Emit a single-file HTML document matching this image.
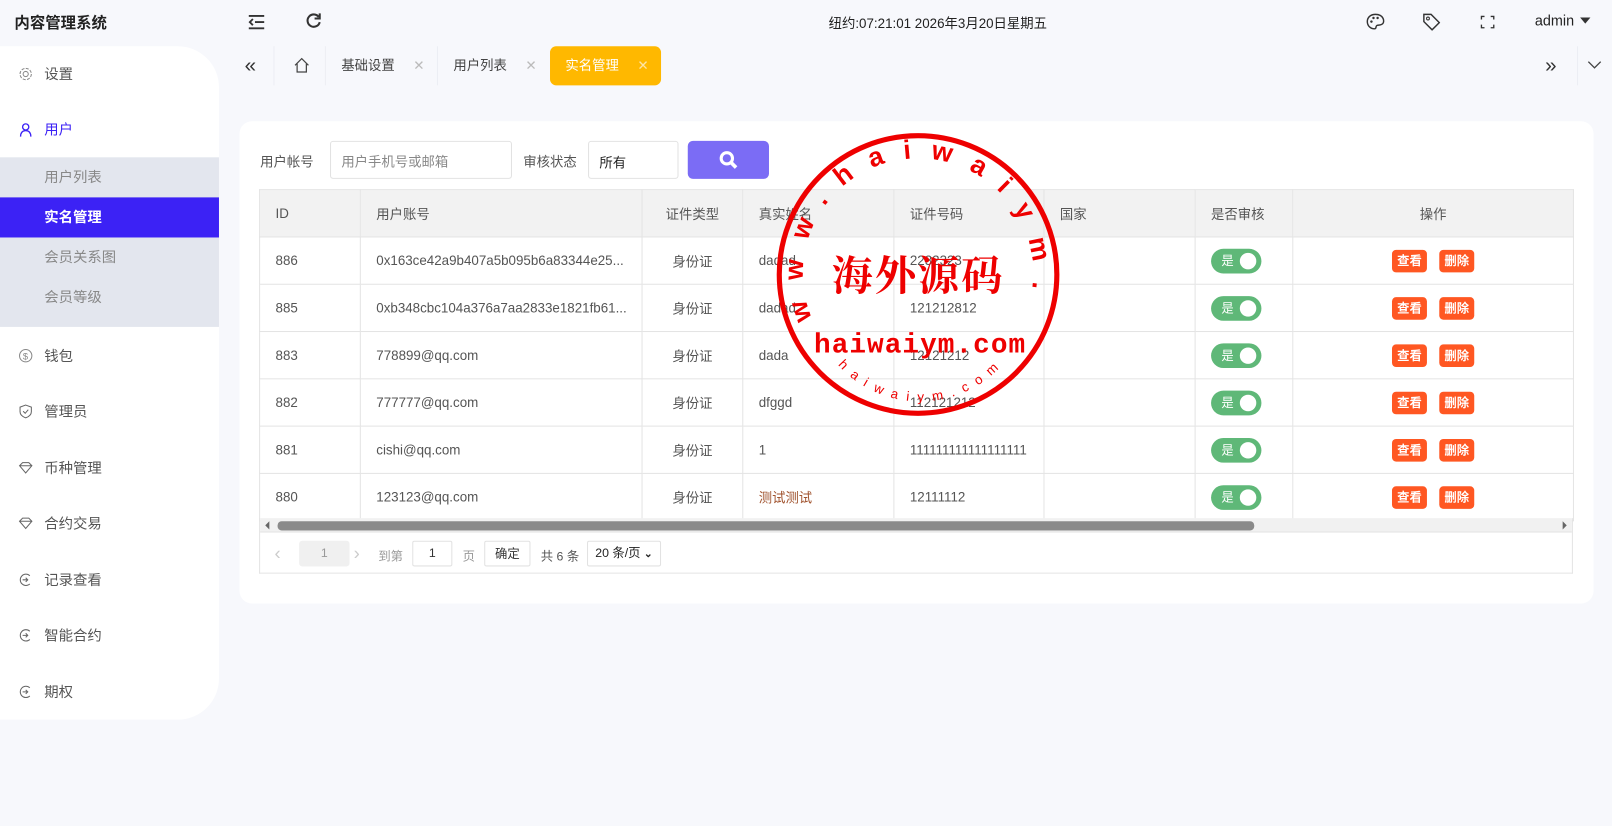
<!DOCTYPE html>
<html><head><meta charset="utf-8">
<style>
*{box-sizing:border-box;margin:0;padding:0}
body{width:1612px;height:825px;background:#f7f8fc;font-family:"Liberation Sans","Noto Sans CJK SC",sans-serif;font-size:13px;color:#333;position:relative;overflow:hidden}
#w{position:absolute;left:0;top:0;width:1568px;height:803px;transform:scale(1.02806);transform-origin:0 0}
.a{position:absolute}
.side{left:0;top:45px;width:213px;height:655px;background:#fff;border-radius:0 40px 40px 0}
.mi{position:absolute;left:0;width:213px;height:40px;line-height:40px;padding-left:43px;color:#555;font-size:14px}
.mi svg{position:absolute;left:18px;top:13px}
.sub{left:0;top:153px;width:213px;height:165px;background:#e3e6ee}
.sub div{height:39px;line-height:39px;padding-left:43px;color:#888;font-size:14px}
.sub .on{background:#3c22f5;color:#fff;font-weight:bold}
.card{left:233px;top:118px;width:1317px;height:469px;background:#fff;border-radius:12px}
table{border-collapse:collapse;position:absolute;left:252px;top:184px;width:1278px;table-layout:fixed}
td,th{border:1px solid #e4e4e4;height:46px;font-weight:normal;text-align:left;padding-left:15px;color:#555;white-space:nowrap;overflow:hidden;text-overflow:ellipsis;font-size:13px}
th{background:#f2f2f2;color:#555}
.c{text-align:center;padding-left:0}
.sw{display:inline-block;width:49px;height:24px;border-radius:12px;background:#5fb878;color:#fff;font-size:12px;line-height:24px;padding-left:10px;position:relative;vertical-align:middle}
.sw:after{content:"";position:absolute;right:5px;top:4px;width:16px;height:16px;border-radius:50%;background:#fff}
.b{display:inline-block;width:34px;height:22px;line-height:22px;text-align:center;background:#ff5722;color:#fff;border-radius:4px;font-size:12px;font-weight:bold;margin:0 6px}
.tab{top:45px;height:38px;line-height:38px;font-size:13px;color:#444}
.x{color:#bbb;margin-left:18px}
</style></head><body><div id="w">
<div class="a" style="left:14px;top:11px;font-size:15px;font-weight:bold;color:#222">内容管理系统</div>
<svg class="a" style="left:241px;top:14px" width="17" height="15" viewBox="0 0 17 15"><path d="M1 1.5h15M7 7.5h9M1 13.5h15M5 4.5L2 7.5l3 3" stroke="#333" stroke-width="1.8" fill="none"/></svg>
<svg class="a" style="left:297px;top:12px" width="16" height="17" viewBox="0 0 16 17"><path d="M13 4.5A6 6 0 1 0 14 9.5" stroke="#333" stroke-width="2" fill="none"/><path d="M14 1v5h-5" stroke="#333" stroke-width="2" fill="none"/></svg>
<div class="a" style="left:806px;top:12px;font-size:13px;color:#222">纽约:07:21:01 2026年3月20日星期五</div>
<svg class="a" style="left:1329px;top:13px" width="18" height="16" viewBox="0 0 18 16"><path d="M9 1C4 1 1 4 1 8s3 7 7 7c2 0 1-2 2-3s4 0 6-2 1-9-7-9z" stroke="#333" stroke-width="1.4" fill="none"/><circle cx="5" cy="8" r="1.2" fill="#333"/><circle cx="7" cy="4.5" r="1.2" fill="#333"/><circle cx="11" cy="4.5" r="1.2" fill="#333"/></svg>
<svg class="a" style="left:1384px;top:13px" width="17" height="17" viewBox="0 0 17 17"><path d="M1 1h7l8 8-7 7-8-8z" stroke="#333" stroke-width="1.4" fill="none"/><circle cx="5" cy="5" r="1.4" stroke="#333" fill="none"/></svg>
<svg class="a" style="left:1440px;top:15px" width="14" height="13" viewBox="0 0 14 13"><path d="M1 4V1h3M10 1h3v3M13 9v3h-3M4 12H1V9" stroke="#333" stroke-width="1.3" fill="none"/></svg>
<div class="a" style="left:1493px;top:12px;font-size:14px;color:#222">admin</div>
<div class="a" style="left:1537px;top:17px;border:5px solid transparent;border-top:6px solid #333"></div>

<div class="a side">
<div class="mi" style="top:7px"><svg width="14" height="14" viewBox="0 0 14 14"><circle cx="7" cy="7" r="2.5" stroke="#888" fill="none"/><circle cx="7" cy="7" r="5.5" stroke="#888" fill="none" stroke-dasharray="3 1.3"/></svg>设置</div>
<div class="mi" style="top:61px;color:#3c22f5"><svg width="14" height="14" viewBox="0 0 14 14"><circle cx="7" cy="4.5" r="3" stroke="#3c22f5" fill="none" stroke-width="1.3"/><path d="M2 14c0-4 2-6 5-6s5 2 5 6" stroke="#3c22f5" fill="none" stroke-width="1.3"/></svg>用户</div>
<div class="mi" style="top:281px"><svg width="14" height="14"><circle cx="7" cy="7" r="6" stroke="#888" fill="none"/><text x="4.3" y="10.5" font-size="9" fill="#888">$</text></svg>钱包</div>
<div class="mi" style="top:335px"><svg width="14" height="14"><path d="M7 1l5.5 2v4.5c0 3-3 5-5.5 6C4.5 12.5 1.5 10.5 1.5 7.5V3z" stroke="#666" fill="none"/><path d="M4.5 7l2 2 3-3.5" stroke="#666" fill="none"/></svg>管理员</div>
<div class="mi" style="top:390px"><svg width="14" height="14"><path d="M1 5l3-3h6l3 3-6 7z M1 5h12" stroke="#666" fill="none"/></svg>币种管理</div>
<div class="mi" style="top:444px"><svg width="14" height="14"><path d="M1 5l3-3h6l3 3-6 7z M1 5h12" stroke="#666" fill="none"/></svg>合约交易</div>
<div class="mi" style="top:499px"><svg width="14" height="14"><path d="M11 3A5.5 5.5 0 1 0 11 11" stroke="#666" fill="none"/><path d="M4 7h5M7 5l2 2-2 2" stroke="#666" fill="none"/></svg>记录查看</div>
<div class="mi" style="top:553px"><svg width="14" height="14"><path d="M11 3A5.5 5.5 0 1 0 11 11" stroke="#666" fill="none"/><path d="M4 7h5M7 5l2 2-2 2" stroke="#666" fill="none"/></svg>智能合约</div>
<div class="mi" style="top:608px"><svg width="14" height="14"><path d="M11 3A5.5 5.5 0 1 0 11 11" stroke="#666" fill="none"/><path d="M4 7h5M7 5l2 2-2 2" stroke="#666" fill="none"/></svg>期权</div>
</div>
<div class="a sub"><div>用户列表</div><div class="on">实名管理</div><div>会员关系图</div><div>会员等级</div></div>

<div class="a tab" style="left:238px;font-size:20px;color:#333">«</div>
<div class="a" style="left:266px;top:45px;width:1px;height:38px;background:#eceef3"></div>
<svg class="a" style="left:286px;top:56px" width="15" height="15" viewBox="0 0 15 15"><path d="M1 7.5L7.5 1 14 7.5M3 6v8h9V6" stroke="#444" fill="none" stroke-width="1.2"/></svg>
<div class="a" style="left:316px;top:45px;width:1px;height:38px;background:#eceef3"></div>
<div class="a tab" style="left:332px">基础设置<span class="x">✕</span></div>
<div class="a" style="left:425px;top:45px;width:1px;height:38px;background:#eceef3"></div>
<div class="a tab" style="left:441px">用户列表<span class="x">✕</span></div>
<div class="a tab" style="left:535px;width:108px;background:#ffb800;border-radius:6px;color:#fff;padding-left:15px">实名管理<span class="x" style="color:#fde4a6">✕</span></div>
<div class="a" style="left:1534px;top:45px;width:1px;height:38px;background:#eceef3"></div>
<div class="a tab" style="left:1503px;font-size:20px;color:#333">»</div>
<svg class="a" style="left:1544px;top:59px" width="14" height="9"><path d="M1 1l6 6 6-6" stroke="#444" fill="none" stroke-width="1.3"/></svg>

<div class="a card"></div>
<div class="a" style="left:253px;top:147px;font-size:13px;color:#555">用户帐号</div>
<div class="a" style="left:321px;top:137px;width:177px;height:37px;border:1px solid #e2e2e2;border-radius:3px;padding:9px 0 0 10px;color:#888;font-size:13px">用户手机号或邮箱</div>
<div class="a" style="left:509px;top:147px;color:#555">审核状态</div>
<div class="a" style="left:572px;top:137px;width:88px;height:37px;border:1px solid #e2e2e2;border-radius:3px;padding:10px 0 0 10px;color:#222">所有</div>
<div class="a" style="left:669px;top:137px;width:79px;height:37px;background:#7b6cf5;border-radius:5px"></div>
<svg class="a" style="left:699px;top:146px" width="19" height="19"><circle cx="8" cy="8" r="5.5" stroke="#fff" stroke-width="3" fill="none"/><path d="M12 12l5 5" stroke="#fff" stroke-width="3.5"/></svg>

<table>
<colgroup><col style="width:98px"><col style="width:274px"><col style="width:98px"><col style="width:147px"><col style="width:146px"><col style="width:147px"><col style="width:95px"><col style="width:273px"></colgroup>
<tr><th>ID</th><th>用户账号</th><th class="c">证件类型</th><th>真实姓名</th><th>证件号码</th><th>国家</th><th>是否审核</th><th class="c">操作</th></tr>
<tr><td>886</td><td>0x163ce42a9b407a5b095b6a83344e25...</td><td class="c">身份证</td><td>dadad</td><td>2232323</td><td></td><td><span class="sw">是</span></td><td class="c"><span class="b">查看</span><span class="b">删除</span></td></tr>
<tr><td>885</td><td>0xb348cbc104a376a7aa2833e1821fb61...</td><td class="c">身份证</td><td>dadad</td><td>121212812</td><td></td><td><span class="sw">是</span></td><td class="c"><span class="b">查看</span><span class="b">删除</span></td></tr>
<tr><td>883</td><td>778899@qq.com</td><td class="c">身份证</td><td>dada</td><td>12121212</td><td></td><td><span class="sw">是</span></td><td class="c"><span class="b">查看</span><span class="b">删除</span></td></tr>
<tr><td>882</td><td>777777@qq.com</td><td class="c">身份证</td><td>dfggd</td><td>112121212</td><td></td><td><span class="sw">是</span></td><td class="c"><span class="b">查看</span><span class="b">删除</span></td></tr>
<tr><td>881</td><td>cishi@qq.com</td><td class="c">身份证</td><td>1</td><td>111111111111111111</td><td></td><td><span class="sw">是</span></td><td class="c"><span class="b">查看</span><span class="b">删除</span></td></tr>
<tr><td>880</td><td>123123@qq.com</td><td class="c">身份证</td><td style="color:#a0522d">测试测试</td><td>12111112</td><td></td><td><span class="sw">是</span></td><td class="c"><span class="b">查看</span><span class="b">删除</span></td></tr>
</table>
<div class="a" style="left:252px;top:504px;width:1278px;height:54px;border:1px solid #e4e4e4;border-top:none"></div>
<div class="a" style="left:253px;top:504px;width:1276px;height:14px;background:#f1f1f1;border-bottom:1px solid #e4e4e4"></div>
<div class="a" style="left:270px;top:507px;width:950px;height:9px;background:#8a8a8a;border-radius:4px"></div>
<div class="a" style="left:258px;top:507px;border:4px solid transparent;border-right:4px solid #666;border-left:none"></div>
<div class="a" style="left:1520px;top:507px;border:4px solid transparent;border-left:4px solid #666;border-right:none"></div>
<div class="a" style="left:267px;top:528px;color:#ccc;font-size:18px">‹</div>
<div class="a" style="left:291px;top:526px;width:49px;height:25px;background:#f0f0f0;border-radius:3px;text-align:center;line-height:25px;color:#999;font-size:12px">1</div>
<div class="a" style="left:344px;top:528px;color:#ccc;font-size:18px">›</div>
<div class="a" style="left:368px;top:532px;color:#999;font-size:12px">到第</div>
<div class="a" style="left:401px;top:526px;width:39px;height:25px;border:1px solid #e2e2e2;border-radius:2px;text-align:center;line-height:23px;font-size:12px">1</div>
<div class="a" style="left:450px;top:532px;color:#999;font-size:12px">页</div>
<div class="a" style="left:471px;top:526px;width:45px;height:25px;border:1px solid #e2e2e2;border-radius:2px;text-align:center;line-height:24px;font-size:12px">确定</div>
<div class="a" style="left:526px;top:532px;color:#555;font-size:12px">共 6 条</div>
<div class="a" style="left:571px;top:526px;width:72px;height:25px;border:1px solid #e2e2e2;border-radius:2px;line-height:23px;padding-left:7px;font-size:12px;color:#222">20 条/页 <b style="font-size:10px">⌄</b></div>

<svg class="a" style="left:740px;top:115px" width="310" height="310" viewBox="740 115 310 310">
<defs>
<path id="tp" d="M790 310 A112 112 0 1 1 998 305"/>
<path id="bp" d="M815 355 A108 108 0 0 0 975 355"/>
</defs>
<circle cx="893" cy="267" r="135" stroke="#ee0000" stroke-width="5" fill="none"/>
<text font-family="Liberation Sans,sans-serif" font-weight="bold" font-size="26" fill="#ee0000"><textPath href="#tp" textLength="520" lengthAdjust="spacing">www.haiwaiym.com</textPath></text>
<text font-family="Liberation Sans,sans-serif" font-size="13" fill="#ee0000"><textPath href="#bp" textLength="175" lengthAdjust="spacing">haiwaiym.com</textPath></text>
<text x="893" y="282" text-anchor="middle" font-family="Noto Serif CJK SC,serif" font-weight="bold" font-size="40" fill="#ee0000" letter-spacing="2">海外源码</text>
<text x="895" y="343" text-anchor="middle" font-family="Liberation Mono,monospace" font-weight="bold" font-size="27" fill="#ee0000" letter-spacing="1">haiwaiym.com</text>
</svg>
</div></body></html>
